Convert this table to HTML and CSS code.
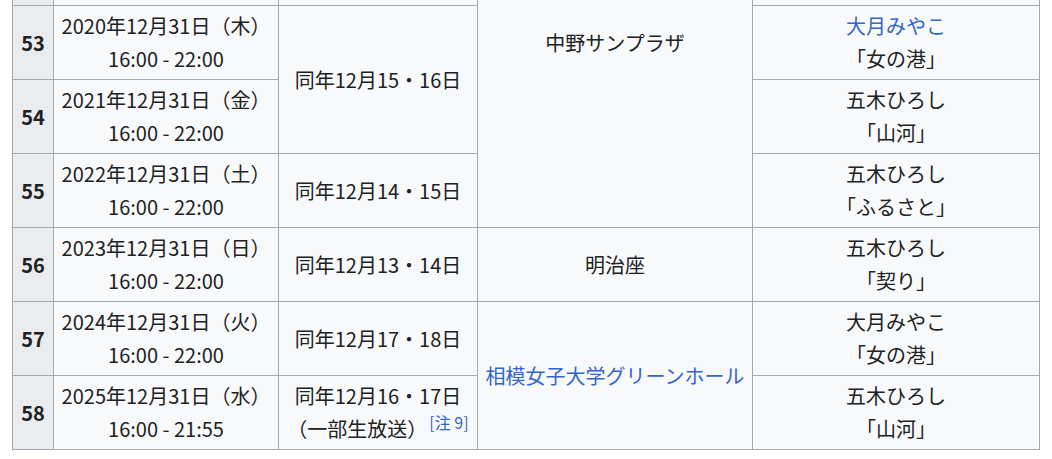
FILE: index.html
```html
<!DOCTYPE html>
<html lang="ja">
<head>
<meta charset="utf-8">
<title>NHK 年忘れにっぽんの歌</title>
<link rel="stylesheet" href="styles.css">
</head>
<body>
<div class="viewport">
<table class="wikitable">
  <colgroup>
    <col class="c-no"><col class="c-date"><col class="c-rec"><col class="c-venue"><col class="c-tori">
  </colgroup>
  <tbody>
    <tr class="hidden-row">
      <th></th>
      <td></td>
      <td></td>
      <td rowspan="5" class="venue">中野サンプラザ</td>
      <td></td>
    </tr>
    <tr class="hidden-row">
      <th></th>
      <td></td>
      <td></td>
      <td></td>
    </tr>
    <tr>
      <th>53</th>
      <td>2020年12月31日（木）<br>16:00 - 22:00</td>
      <td rowspan="2">同年12月15・16日</td>
      <td><a href="#">大月みやこ</a><br>「女の港」</td>
    </tr>
    <tr>
      <th>54</th>
      <td>2021年12月31日（金）<br>16:00 - 22:00</td>
      <td>五木ひろし<br>「山河」</td>
    </tr>
    <tr>
      <th>55</th>
      <td>2022年12月31日（土）<br>16:00 - 22:00</td>
      <td>同年12月14・15日</td>
      <td>五木ひろし<br>「ふるさと」</td>
    </tr>
    <tr>
      <th>56</th>
      <td>2023年12月31日（日）<br>16:00 - 22:00</td>
      <td>同年12月13・14日</td>
      <td>明治座</td>
      <td>五木ひろし<br>「契り」</td>
    </tr>
    <tr>
      <th>57</th>
      <td>2024年12月31日（火）<br>16:00 - 22:00</td>
      <td>同年12月17・18日</td>
      <td rowspan="2"><a href="#">相模女子大学グリーンホール</a></td>
      <td>大月みやこ<br>「女の港」</td>
    </tr>
    <tr>
      <th>58</th>
      <td>2025年12月31日（水）<br>16:00 - 21:55</td>
      <td>同年12月16・17日<br>（一部生放送）<sup class="ref"><a href="#">[注 9]</a></sup></td>
      <td>五木ひろし<br>「山河」</td>
    </tr>
  </tbody>
</table>
</div>
</body>
</html>
```

FILE: styles.css
```css
html, body {
  margin: 0;
  padding: 0;
  background: #ffffff;
}

.viewport {
  height: 459px;
  overflow: hidden;
  padding-left: 12px;
}

.wikitable {
  margin-top: -143px;
  border-collapse: collapse;
  table-layout: fixed;
  width: 1028px;
  background: #f8f9fa;
  color: #202122;
  border: 1px solid #a2a9b1;
  font-family: "Noto Sans CJK JP", "Noto Sans", sans-serif;
  font-size: 20px;
  line-height: 33px;
}

.c-no { width: 41px; }
.c-date { width: 225px; }
.c-rec { width: 199px; }
.c-venue { width: 275px; }
.c-tori { width: 287px; }

.wikitable th,
.wikitable td {
  border: 1px solid #a2a9b1;
  padding: 3px 5px 4px;
  text-align: center;
  vertical-align: middle;
  height: 66px;
  white-space: nowrap;
}

.wikitable th {
  background: #eaecf0;
  font-weight: bold;
}

.wikitable a {
  color: #3366cc;
  text-decoration: none;
}

.ref {
  font-size: 16px;
  line-height: 1;
  vertical-align: 8px;
  margin-left: 2px;
}
```
